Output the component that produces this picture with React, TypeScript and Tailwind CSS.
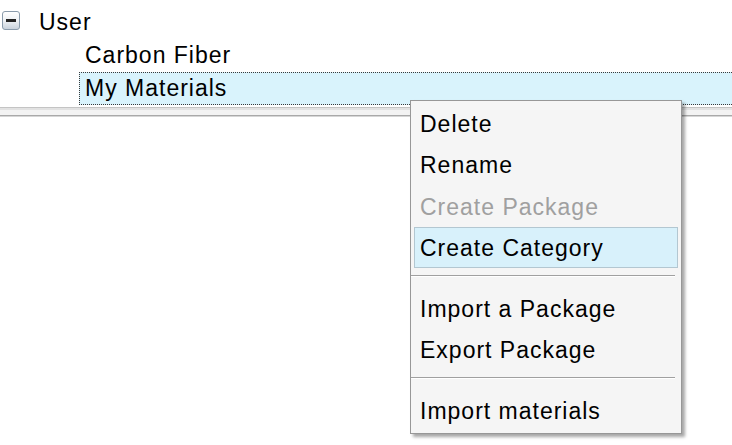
import React from "react";

type Item = { label: string; disabled?: boolean; active?: boolean } | "sep";

const items: Item[] = [
  { label: "Delete" },
  { label: "Rename" },
  { label: "Create Package", disabled: true },
  { label: "Create Category", active: true },
  "sep",
  { label: "Import a Package" },
  { label: "Export Package" },
  "sep",
  { label: "Import materials" },
];

export default function App() {
  return (
    <div className="relative w-[732px] h-[445px] bg-white overflow-hidden font-['Liberation_Sans',Arial,sans-serif] text-[23px] tracking-[1px] text-black">
      {/* Tree */}
      <div className="pt-[6px]">
        <div className="h-[33px] flex items-start">
          <div className="ml-[2px] mt-[5px] w-[18px] h-[19px] rounded-[3px] border border-[#8a9bab] bg-gradient-to-b from-white via-[#eef1f4] to-[#c9d2dc] flex items-center justify-center">
            <div className="w-[10px] h-[3px] bg-[#222]" />
          </div>
          <span className="ml-[19px] leading-[33px] whitespace-nowrap">User</span>
        </div>
        <div className="h-[33px] flex">
          <div className="ml-[79px] border border-transparent pl-[5px] leading-[31px] whitespace-nowrap">
            Carbon Fiber
          </div>
        </div>
        <div className="h-[33px] ml-[79px] border border-r-0 border-dotted border-[#3a3a3a] bg-[#d9f3fc] pl-[5px] leading-[31px] whitespace-nowrap">
          My Materials
        </div>
      </div>

      {/* Bottom edge of the tree pane */}
      <div className="mt-[2px]">
        <div className="h-[1px] bg-[#c4c4c4]" />
        <div className="h-[2px] bg-[#e2e2e2]" />
        <div className="h-[5px] bg-[#f3f3f3]" />
        <div className="h-[1px] bg-[#a9a9a9]" />
        <div className="h-[1px] bg-[#d6d6d6]" />
      </div>

      {/* Context menu */}
      <div className="absolute left-[410px] top-[100px] w-[272px] border border-[#979797] bg-[#f5f5f5] pt-[1px] pb-[2.5px] shadow-[3px_3px_3px_rgba(0,0,0,0.35)]">
        {items.map((it, i) =>
          it === "sep" ? (
            <div key={i} className="h-[19px] pt-[7px] pr-[6px]">
              <div className="h-[1px] bg-[#a0a0a0]" />
              <div className="h-[1px] bg-white" />
            </div>
          ) : (
            <div
              key={i}
              className={
                "mx-[3px] h-[41.5px] border pl-[5px] pt-[2.6px] leading-[36.9px] whitespace-nowrap " +
                (it.active
                  ? "border-[#b3c7d1] bg-[#d8f1fb] "
                  : "border-transparent ") +
                (it.disabled ? "text-[#a0a0a0]" : "text-black")
              }
            >
              {it.label}
            </div>
          )
        )}
      </div>
    </div>
  );
}
